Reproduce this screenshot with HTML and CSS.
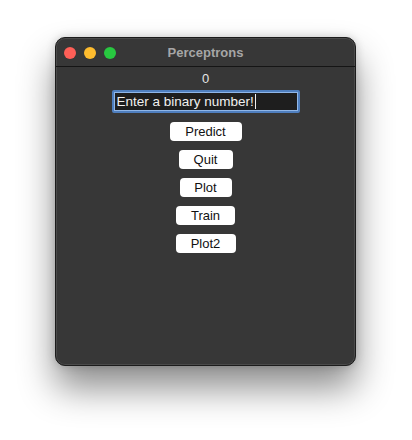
FILE: index.html
```html
<!DOCTYPE html>
<html>
<head>
<meta charset="utf-8">
<link rel="stylesheet" href="styles.css">
</head>
<body>
<div class="window">
  <div class="titlebar">
    <div class="lights">
      <span class="light red"></span>
      <span class="light yellow"></span>
      <span class="light green"></span>
    </div>
    <div class="title">Perceptrons</div>
  </div>
  <div class="content">
    <div class="label">0</div>
    <div class="entry"><span class="entry-text">Enter a binary number!</span><span class="caret"></span></div>
    <button class="btn btn-predict">Predict</button>
    <button class="btn btn-quit">Quit</button>
    <button class="btn btn-plot">Plot</button>
    <button class="btn btn-train">Train</button>
    <button class="btn btn-plot2">Plot2</button>
  </div>
</div>
</body>
</html>
```
FILE: styles.css
```css
html, body {
  margin: 0;
  padding: 0;
  background: #ffffff;
  width: 412px;
  height: 440px;
  overflow: hidden;
  font-family: "Liberation Sans", Arial, sans-serif;
}
body {
  padding-top: 37px;
  padding-left: 55px;
  box-sizing: border-box;
}
.window {
  width: 301px;
  height: 329px;
  box-sizing: border-box;
  border-radius: 10px;
  background: #373737;
  border: 1px solid #1c1c1c;
  box-shadow: inset 0 0 0 1px #4a4a4a, 0 22px 36px rgba(0,0,0,0.45), 0 0 10px rgba(0,0,0,0.18);
  display: flex;
  flex-direction: column;
  overflow: hidden;
}
.titlebar {
  height: 28px;
  border-bottom: 1px solid #151515;
  display: flex;
  align-items: center;
  position: relative;
  flex-shrink: 0;
}
.lights {
  display: flex;
  gap: 8px;
  padding-left: 8px;
  padding-top: 1px;
}
.light {
  width: 12px;
  height: 12px;
  border-radius: 50%;
  display: block;
}
.red { background: #fe5f57; }
.yellow { background: #febc2e; }
.green { background: #28c840; }
.title {
  position: absolute;
  left: 0;
  right: 0;
  top: 7px;
  text-align: center;
  color: #a6a6a6;
  font-weight: bold;
  font-size: 13px;
}
.content {
  display: flex;
  flex-direction: column;
  align-items: center;
  padding-top: 4px;
}
.label {
  color: #e6e6e6;
  font-size: 13px;
  line-height: 15px;
  height: 15px;
}
.entry {
  margin-top: 4px;
  width: 188px;
  height: 23px;
  box-sizing: border-box;
  background: #1e1e1e;
  border: 2px solid #4f7fbf;
  box-shadow: inset 0 0 0 1px #8fb6e8;
  border-radius: 2px;
  display: flex;
  align-items: center;
  padding-left: 3px;
  color: #f0f0f0;
  font-size: 13.5px;
}
.caret {
  display: inline-block;
  width: 1px;
  height: 15px;
  background: #f0f0f0;
  margin-left: 1px;
}
.btn {
  margin-top: 9px;
  height: 19px;
  box-sizing: border-box;
  background: #ffffff;
  border: none;
  border-radius: 4px;
  font-family: "Liberation Sans", Arial, sans-serif;
  font-size: 13px;
  color: #111111;
  padding: 0;
  line-height: 19px;
}
.btn-predict { width: 72px; }
.btn-quit { width: 54px; }
.btn-plot { width: 52px; }
.btn-train { width: 59px; }
.btn-plot2 { width: 60px; }
```
